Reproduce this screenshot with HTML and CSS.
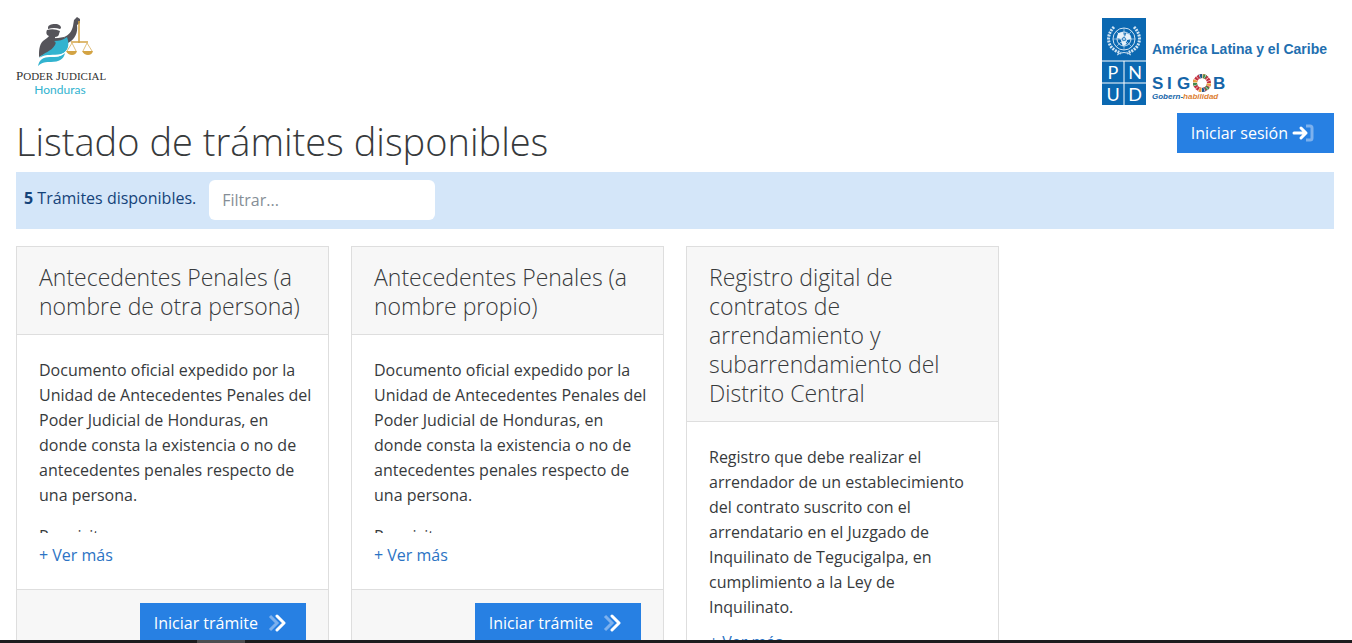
FILE: index.html
```html
<!DOCTYPE html>
<html lang="es">
<head>
    <meta charset="UTF-8">
    <meta name="viewport" content="width=device-width, initial-scale=1.0">
    <title>Listado de trámites disponibles</title>
    <link rel="stylesheet" href="styles.css">
</head>
<body>
    <!-- Iconos compartidos -->
    <svg class="sprite" aria-hidden="true">
        <symbol id="icon-angles" viewBox="0 0 20 18">
            <path d="M2 2l7 7-7 7" fill="none" stroke="#7db1ee" stroke-width="3"/>
            <path d="M9 2l7 7-7 7" fill="none" stroke="#fff" stroke-width="3" stroke-linecap="round" stroke-linejoin="round"/>
        </symbol>
    </svg>

    <div class="page">
        <!-- Logos -->
        <header class="header">
            <svg class="logo-pj" viewBox="0 0 90 82" role="img" aria-label="Poder Judicial Honduras">
                <g fill="#55545a">
                    <path d="M32 12c0-3 3-4 7-4s6 2 6 4l-1 1q-6-2-12 0z"/>
                    <path d="M31 14q7-2 13 1l-1 3c0 2-2 3-4 3v3l2 1c-1 7-6 11-14 14l-4 2c0-6 0-12 4-16 2-2 5-3 6-5-3-1-3-4-2-6z"/>
                    <path d="M48 21c5-2 8-6 9-11l1-6 3-3 3 2v4l-3 2c1 8-2 14-9 18z"/>
                    <path d="M31 22q8 1 17-1l4 4-12 5z"/>
                </g>
                <path d="M51 21c3 8 1 15-6 17-8 2-14-1-22 4 5-6 12-6 16-13 1-2 1-3-1-4 5 0 9-1 13-4z" fill="#32b3cf"/>
                <path d="M49 37c-1 6-6 9-14 9-5 0-9 0-13 4 1-6 5-9 12-9 6 0 11 0 15-4z" fill="#32b3cf"/>
                <path d="M23 43c6-4 13-2 19-3 4-1 7-3 9-6" fill="none" stroke="#fff" stroke-width=".8"/>
                <g fill="none" stroke="#d3a343" stroke-width="1">
                    <path d="M63 5v22M55 26h17" stroke-width="1.5"/>
                    <path d="M56 27l-5 8M56 27l4 8M71 27l-4 8M71 27l5 8" stroke-width=".7"/>
                </g>
                <path d="M50 35h11q-1 4-5 4t-6-4zM66 35h11q-1 4-5 4t-6-4z" fill="#d3a343"/>
                <text x="0" y="64" class="pj-name"><tspan class="pj-cap">P</tspan>ODER <tspan class="pj-cap">J</tspan>UDICIAL</text>
                <text x="44" y="78" text-anchor="middle" class="pj-country">Honduras</text>
            </svg>

            <div class="sponsor">
                <svg class="logo-pnud" viewBox="0 0 44 88" role="img" aria-label="PNUD">
                    <rect width="44" height="87" fill="#0b68b1"/>
                    <path d="M0 43h44M0 65h44M22 43v44" stroke="#fff" stroke-width="1"/>
                    <g fill="none" stroke="#cfe3f3">
                        <circle cx="22" cy="21" r="11"/>
                        <circle cx="22" cy="21" r="7"/>
                        <circle cx="22" cy="21" r="3"/>
                        <path d="M22 10v22M11 21h22M14 13l16 16M30 13L14 29" stroke-width=".6"/>
                        <path d="M12 9c-9 9-7 22 7 26M32 9c9 9 7 22-7 26" stroke-width="3" stroke-dasharray="2 1"/>
                        <path d="M15 37q7-5 14 0"/>
                    </g>
                    <path d="M16 15l5-1 1 4-3 3-4-1zM24 15l4 2 1 4-4 1-2-3zM19 24l4-1 2 3-4 2z" fill="#e7f1f9"/>
                    <g class="pnud-letters" text-anchor="middle">
                        <text x="11" y="61">P</text>
                        <text x="33" y="61">N</text>
                        <text x="11" y="83">U</text>
                        <text x="33" y="83">D</text>
                    </g>
                </svg>
                <div class="sponsor-text">
                    <span class="region">América Latina y el Caribe</span>
                    <svg class="logo-sigob" viewBox="0 0 76 28" role="img" aria-label="SIGOB Gobern-habilidad">
                        <g class="sigob-letters">
                            <text x="0" y="16">S</text>
                            <text x="15" y="16">I</text>
                            <text x="25" y="16">G</text>
                            <text x="61" y="16">B</text>
                        </g>
                        <g fill="none" stroke-width="4">
                            <circle cx="50" cy="10" r="7" stroke="#c5303f"/>
                            <circle cx="50" cy="10" r="7" stroke="#e9a03b" stroke-dasharray="3 8"/>
                            <circle cx="50" cy="10" r="7" stroke="#3d8a4b" stroke-dasharray="3 12" stroke-dashoffset="-4"/>
                            <circle cx="50" cy="10" r="7" stroke="#1c5a8c" stroke-dasharray="3 19" stroke-dashoffset="-8"/>
                            <circle cx="50" cy="10" r="7" stroke="#fff" stroke-dasharray=".5 2.25"/>
                        </g>
                        <text x="0" y="26" class="sigob-tag">Gobern-<tspan fill="#dd8136">habilidad</tspan></text>
                    </svg>
                </div>
            </div>
        </header>

        <div class="title-row">
            <h1>Listado de trámites disponibles</h1>
            <button type="button" class="btn btn-login">
                Iniciar sesión
                <svg class="icon-login" viewBox="0 0 22 18" aria-hidden="true">
                    <path d="M14 2h4q2 0 2 2v10q0 2-2 2h-4" fill="none" stroke="#7db1ee" stroke-width="3"/>
                    <path d="M2 9h12M9 4l5 5-5 5" fill="none" stroke="#fff" stroke-width="3" stroke-linecap="round" stroke-linejoin="round"/>
                </svg>
            </button>
        </div>

        <!-- Filtro -->
        <div class="filter-bar">
            <label for="filtro"><strong>5</strong> Trámites disponibles.</label>
            <input type="text" id="filtro" placeholder="Filtrar...">
        </div>

        <!-- Listado -->
        <main class="cards">
            <article class="card">
                <h2>Antecedentes Penales (a nombre de otra persona)</h2>
                <div class="card-body">
                    <div class="excerpt">
                        <p>Documento oficial expedido por la Unidad de Antecedentes Penales del Poder Judicial de Honduras, en donde consta la existencia o no de antecedentes penales respecto de una persona.</p>
                        <p>Requisitos</p>
                    </div>
                    <a href="#" class="more">+ Ver más</a>
                </div>
                <div class="card-footer">
                    <button type="button" class="btn">Iniciar trámite <svg class="icon-angles" aria-hidden="true"><use href="#icon-angles"/></svg></button>
                </div>
            </article>

            <article class="card">
                <h2>Antecedentes Penales (a nombre propio)</h2>
                <div class="card-body">
                    <div class="excerpt">
                        <p>Documento oficial expedido por la Unidad de Antecedentes Penales del Poder Judicial de Honduras, en donde consta la existencia o no de antecedentes penales respecto de una persona.</p>
                        <p>Requisitos</p>
                    </div>
                    <a href="#" class="more">+ Ver más</a>
                </div>
                <div class="card-footer">
                    <button type="button" class="btn">Iniciar trámite <svg class="icon-angles" aria-hidden="true"><use href="#icon-angles"/></svg></button>
                </div>
            </article>

            <article class="card">
                <h2>Registro digital de contratos de arrendamiento y subarrendamiento del Distrito Central</h2>
                <div class="card-body">
                    <div class="excerpt">
                        <p>Registro que debe realizar el arrendador de un establecimiento del contrato suscrito con el arrendatario en el Juzgado de Inquilinato de Tegucigalpa, en cumplimiento a la Ley de<br>Inquilinato.</p>
                    </div>
                    <a href="#" class="more">+ Ver más</a>
                </div>
            </article>
        </main>
    </div>
    <div class="bottom-bar"><span></span></div>
</body>
</html>
```
FILE: styles.css
```css
* {
    box-sizing: border-box;
}
body {
    margin: 0;
    height: 100vh;
    display: flex;
    flex-direction: column;
    overflow: hidden;
    font-family: "Open Sans", "Noto Sans", sans-serif;
    font-size: 16px;
    line-height: 25px;
    color: #373a3c;
    background: #fff;
}
.sprite {
    display: none;
}
.page {
    flex: 1;
    min-height: 0;
    overflow: hidden;
    padding: 16px 18px 0 16px;
}
.header {
    display: flex;
    justify-content: space-between;
    height: 97px;
}
.logo-pj {
    width: 90px;
    height: 82px;
}
.pj-name {
    font-family: "Liberation Serif", serif;
    font-size: 11px;
    fill: #333;
}
.pj-cap {
    font-size: 13px;
}
.pj-country {
    font-family: Lato, sans-serif;
    font-size: 12px;
    fill: #32b3cf;
}
.sponsor {
    display: flex;
    gap: 6px;
    padding: 2px 7px 0 0;
}
.logo-pnud {
    width: 44px;
    height: 88px;
}
.pnud-letters {
    font-family: Lato, sans-serif;
    font-size: 18px;
    fill: #fff;
}
.sponsor-text {
    display: flex;
    flex-direction: column;
    gap: 12px;
    padding-top: 19px;
    font-family: "Liberation Sans", sans-serif;
}
.region {
    font-size: 14px;
    line-height: 24px;
    font-weight: bold;
    color: #1f6fb0;
}
.logo-sigob {
    width: 76px;
    height: 28px;
}
.sigob-letters {
    font-size: 17px;
    font-weight: bold;
    fill: #1565a8;
}
.sigob-tag {
    font-size: 8px;
    font-weight: bold;
    font-style: italic;
    fill: #1565a8;
}
.title-row {
    display: flex;
    justify-content: space-between;
    align-items: flex-start;
}
h1 {
    margin: 0;
    font-size: 38px;
    line-height: 56px;
    padding-bottom: 3px;
    font-weight: 300;
}
.btn {
    display: inline-flex;
    align-items: center;
    height: 40px;
    padding: 0 14px;
    border: none;
    font: inherit;
    color: #fff;
    background: #2780e3;
    cursor: pointer;
}
.btn-login {
    gap: 4px;
    padding-right: 20px;
}
.icon-login {
    width: 22px;
    height: 18px;
}
.filter-bar {
    display: flex;
    gap: 13px;
    padding: 8px;
    background: #d4e6f9;
    color: #14437a;
    height: 57px;
}
.filter-bar label {
    padding-top: 6px;
}
.filter-bar input {
    width: 226px;
    height: 40px;
    padding: 0 13px;
    border: none;
    border-radius: 6px;
    font: inherit;
    color: #373a3c;
}
.filter-bar input::placeholder {
    color: #868e96;
}
.cards {
    display: grid;
    grid-template-columns: repeat(4, 1fr);
    align-items: start;
    gap: 22px;
    padding-top: 17px;
}
.card {
    border: 1px solid #dedede;
}
h2 {
    margin: 0;
    padding: 16px 12px 13px 22px;
    font-size: 23px;
    line-height: 29px;
    font-weight: 300;
    background: #f7f7f7;
    border-bottom: 1px solid #dedede;
}
.card-body {
    padding: 23px 12px 21px 22px;
}
.excerpt {
    max-height: 175px;
    overflow: hidden;
}
.excerpt p {
    margin: 0 0 16px;
}
.more {
    display: block;
    margin-top: 10px;
    color: #2b73c4;
    text-decoration: none;
}
.card-footer {
    display: flex;
    justify-content: flex-end;
    padding: 13px 22px;
    background: #f7f7f7;
    border-top: 1px solid #dedede;
}
.icon-angles {
    width: 20px;
    height: 18px;
    margin: 0 4px 0 10px;
}
.bottom-bar {
    height: 3px;
    padding-left: 197px;
    background: #1c1c1e;
}
.bottom-bar span {
    display: block;
    width: 48px;
    height: 3px;
    background: #4d4d50;
}
```
